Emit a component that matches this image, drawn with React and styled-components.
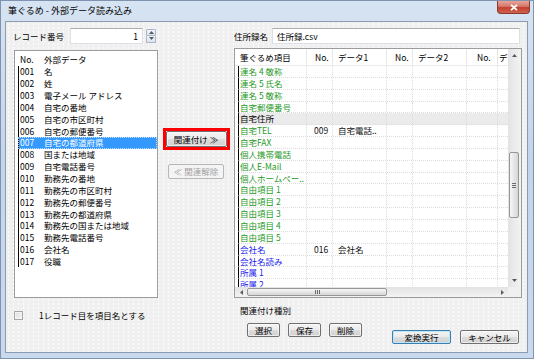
import React from "react";
import styled, { createGlobalStyle, css } from "styled-components";

const GlobalStyle = createGlobalStyle`
  html, body { margin: 0; padding: 0; background: #c6d7ec; }
  body {
    font-family: "Noto Sans CJK JP", "Liberation Sans", sans-serif;
    font-size: 8.5px;
    color: #000;
    overflow: hidden;
  }
  * { box-sizing: border-box; }
`;

const externalData = [
  ["001", "名"],
  ["002", "姓"],
  ["003", "電子メール アドレス"],
  ["004", "自宅の番地"],
  ["005", "自宅の市区町村"],
  ["006", "自宅の郵便番号"],
  ["007", "自宅の都道府県"],
  ["008", "国または地域"],
  ["009", "自宅電話番号"],
  ["010", "勤務先の番地"],
  ["011", "勤務先の市区町村"],
  ["012", "勤務先の郵便番号"],
  ["013", "勤務先の都道府県"],
  ["014", "勤務先の国または地域"],
  ["015", "勤務先電話番号"],
  ["016", "会社名"],
  ["017", "役職"],
];
const SELECTED = "007";

const fields = [
  { name: "連名 4 敬称", kind: "green" },
  { name: "連名 5 氏名", kind: "green" },
  { name: "連名 5 敬称", kind: "green" },
  { name: "自宅郵便番号", kind: "green" },
  { name: "自宅住所", kind: "section" },
  { name: "自宅TEL", kind: "green", no: "009", data: "自宅電話.." },
  { name: "自宅FAX", kind: "green" },
  { name: "個人携帯電話", kind: "green" },
  { name: "個人E-Mail", kind: "green" },
  { name: "個人ホームペー..", kind: "green" },
  { name: "自由項目 1", kind: "green" },
  { name: "自由項目 2", kind: "green" },
  { name: "自由項目 3", kind: "green" },
  { name: "自由項目 4", kind: "green" },
  { name: "自由項目 5", kind: "green" },
  { name: "会社名", kind: "blue", no: "016", data: "会社名" },
  { name: "会社名読み", kind: "blue" },
  { name: "所属 1", kind: "blue" },
  { name: "所属 2", kind: "blue" },
];

// header column widths and text indents
const columns = [
  { w: 72, pad: 5, label: "筆ぐるめ項目" },
  { w: 26, pad: 8, label: "No." },
  { w: 54, pad: 5, label: "データ1" },
  { w: 26, pad: 8, label: "No." },
  { w: 54, pad: 5, label: "データ2" },
  { w: 31, pad: 10, label: "No." },
  { w: 60, pad: 1, label: "データ3" },
];

const kindColor = { green: "#1f991f", blue: "#1c1ced", section: "#000" };

const Arrow = ({ dir }) => {
  const v = dir === "up" || dir === "down";
  const pts = {
    up: "0,3 2.5,0 5,3",
    down: "0,0 2.5,3 5,0",
    left: "3,0 0,2.5 3,5",
    right: "0,0 3,2.5 0,5",
  }[dir];
  return (
    <svg width={v ? 5 : 3} height={v ? 3 : 5} viewBox={v ? "0 0 5 3" : "0 0 3 5"}>
      <polygon points={pts} fill="#5a5a5a" />
    </svg>
  );
};

const App = () => (
  <>
    <GlobalStyle />
    <Window>
      <TitleBar>
        <Title>筆ぐるめ - 外部データ読み込み</Title>
        <CloseButton>
          <svg width="8" height="7" viewBox="0 0 8 7">
            <path d="M1 0.8 L7 6.2 M7 0.8 L1 6.2" stroke="#fff" strokeWidth="1.8" />
          </svg>
        </CloseButton>
      </TitleBar>

      <Client>
        <LeftCol>
          <FieldRow>
            <FieldLabel $w={57}>レコード番号</FieldLabel>
            <TextBox $w={73} $right>1</TextBox>
            <Spinner>
              <SpinHalf><Arrow dir="up" /></SpinHalf>
              <SpinHalf><Arrow dir="down" /></SpinHalf>
            </Spinner>
          </FieldRow>

          <ListBox>
            <ListHeader>
              <NoCell>No.</NoCell>
              <span>外部データ</span>
            </ListHeader>
            {externalData.map(([no, name]) => (
              <ListRow key={no} $selected={no === SELECTED}>
                <NoCell>{no}</NoCell>
                <span>{name}</span>
              </ListRow>
            ))}
          </ListBox>

          <CheckRow>
            <CheckBox />
            <span>1レコード目を項目名とする</span>
          </CheckRow>
        </LeftCol>

        <MidCol>
          <RedFrame>
            <Button $w={61} $h={16}>関連付け ≫</Button>
          </RedFrame>
          <Button $w={56} $h={15} $mt={14} disabled>
            ≪ 関連解除
          </Button>
        </MidCol>

        <RightCol>
          <FieldRow>
            <FieldLabel $w={38}>住所録名</FieldLabel>
            <TextBox $w={248}>住所録.csv</TextBox>
          </FieldRow>

          <Grid>
            <GridTop>
              <Viewport>
                <GridHeader>
                  {columns.map((c, i) => (
                    <HeadCell key={i} $w={c.w} $pad={c.pad}>
                      {c.label}
                    </HeadCell>
                  ))}
                </GridHeader>
                {fields.map((f) => (
                  <GridRow key={f.name} $kind={f.kind}>
                    {columns.map((c, i) => (
                      <Cell
                        key={i}
                        $w={i === 0 ? c.w - 4 : c.w}
                        $pad={i === 0 ? 1 : i % 2 ? 7 : 5}
                        $plain={i > 0}
                      >
                        {i === 0 ? f.name : i === 1 ? f.no : i === 2 ? f.data : ""}
                      </Cell>
                    ))}
                  </GridRow>
                ))}
              </Viewport>
              <VScroll>
                <ArrowBox $h={13}><Arrow dir="up" /></ArrowBox>
                <VTrack>
                  <VThumb>
                    <Grip $vertical={false} />
                  </VThumb>
                </VTrack>
                <ArrowBox $h={13}><Arrow dir="down" /></ArrowBox>
              </VScroll>
            </GridTop>
            <GridBottom>
              <HScroll>
                <ArrowBox $w={12}><Arrow dir="left" /></ArrowBox>
                <HThumb>
                  <Grip $vertical />
                </HThumb>
                <ArrowBox $w={12} $end><Arrow dir="right" /></ArrowBox>
              </HScroll>
              <Corner />
            </GridBottom>
          </Grid>

          <BottomBar>
            <KindGroup>
              <span>関連付け種別</span>
              <KindButtons>
                <Button $w={33} $h={14}>選択</Button>
                <Button $w={33} $h={14}>保存</Button>
                <Button $w={33} $h={14}>削除</Button>
              </KindButtons>
            </KindGroup>
            <DialogButtons>
              <Button $w={59} $h={14} $default>変換実行</Button>
              <Button $w={59} $h={14}>キャンセル</Button>
            </DialogButtons>
          </BottomBar>
        </RightCol>
      </Client>
    </Window>
  </>
);

export default App;

const Window = styled.div`
  width: 534px;
  height: 359px;
  display: flex;
  flex-direction: column;
  padding: 0 5px 5px 4px;
  border: 1px solid #7f93ae;
  background: linear-gradient(180deg, #d6e3f2 0%, #c3d5eb 45%, #c9daee 100%);
`;

const TitleBar = styled.div`
  height: 20px;
  margin: 0 -5px 0 -4px;
  padding: 0 3px 0 7px;
  display: flex;
  align-items: flex-start;
`;

const Title = styled.div`
  align-self: center;
  font-size: 9px;
  line-height: 12px;
  flex: 1;
`;

const CloseButton = styled.div`
  width: 33px;
  height: 13px;
  display: flex;
  align-items: center;
  justify-content: center;
  border: 1px solid #8a3a32;
  border-top: none;
  border-radius: 0 0 4px 4px;
  background: linear-gradient(180deg, #e7a59b 0%, #d6776a 45%, #c2402f 55%, #d0614d 100%);
`;

const Client = styled.div`
  flex: 1;
  display: flex;
  padding: 5px 5px 0 7px;
  border: 1px solid #8c9bb0;
  background-color: #f0f0f0;
  background-image: radial-gradient(circle, rgba(255, 255, 255, 0.8) 0.5px, transparent 0.8px);
  background-size: 5px 4px;
`;

const LeftCol = styled.div`
  width: 145px;
  display: flex;
  flex-direction: column;
`;

const MidCol = styled.div`
  width: 76px;
  display: flex;
  flex-direction: column;
  align-items: center;
  padding-top: 101px;
`;

const RightCol = styled.div`
  width: 288px;
  display: flex;
  flex-direction: column;
`;

const FieldRow = styled.div`
  height: 17px;
  display: flex;
  align-items: center;
`;

const FieldLabel = styled.span`
  width: ${(p) => p.$w}px;
  line-height: 12px;
`;

const TextBox = styled.div`
  width: ${(p) => p.$w}px;
  height: 16px;
  margin-top: 1px;
  padding: 0 4px;
  line-height: 14px;
  text-align: ${(p) => (p.$right ? "right" : "left")};
  background: #fff;
  border: 1px solid #dbe0e7;
  border-top-color: #abadb3;
`;

const Spinner = styled.div`
  width: 10px;
  height: 14px;
  margin-left: 3px;
  display: flex;
  flex-direction: column;
`;

const SpinHalf = styled.div`
  flex: 1;
  display: flex;
  align-items: center;
  justify-content: center;
  border: 1px solid #a9b6c8;
  border-radius: 1px;
  background: linear-gradient(180deg, #f4f7fb, #dbe4ef);

  & + & {
    border-top: none;
  }
`;

const ListBox = styled.div`
  margin: 6px 0 0 1px;
  width: 144px;
  height: 248px;
  background: #fff;
  border: 1px solid #9c9c9c;
  overflow: hidden;
`;

const ListHeader = styled.div`
  height: 15px;
  display: flex;
  align-items: center;
  padding-left: 4px;
  line-height: 12px;
`;

const NoCell = styled.span`
  width: 25px;
  padding-left: 1px;
`;

const ListRow = styled.div`
  height: 11.85px;
  margin-left: 3px;
  display: flex;
  align-items: center;
  line-height: 11px;
  border-left: 1px solid #000;
  white-space: nowrap;
  ${(p) =>
    p.$selected &&
    css`
      background: #3399ff;
      color: #fff;
      outline: 1px dotted rgba(255, 255, 255, 0.7);
      outline-offset: -1px;
    `}
`;

const CheckRow = styled.div`
  margin: 12px 0 0 1px;
  display: flex;
  align-items: center;
  gap: 16px;
  line-height: 10px;
`;

const CheckBox = styled.div`
  width: 9px;
  height: 9px;
  border: 1px solid #a6a6a6;
  background: linear-gradient(135deg, #dedede, #f7f7f7);
  box-shadow: inset 0 0 0 1px #f4f4f4;
`;

const RedFrame = styled.div`
  border: 3px solid #ff0000;
  display: flex;
`;

const Button = styled.button`
  width: ${(p) => p.$w}px;
  height: ${(p) => p.$h}px;
  margin: ${(p) => p.$mt || 0}px 0 0 0;
  padding: 0;
  font-family: inherit;
  font-size: 8.5px;
  line-height: ${(p) => p.$h - 2}px;
  color: #000;
  white-space: nowrap;
  border: 1px solid #707070;
  border-radius: 2px;
  background: linear-gradient(180deg, #f4f4f4 0%, #ebebeb 48%, #dddddd 52%, #d0d0d0 100%);
  box-shadow: inset 0 0 0 1px rgba(255, 255, 255, 0.6);

  ${(p) =>
    p.$default &&
    css`
      border-color: #3c7fb1;
      box-shadow: inset 0 0 0 1px #bfe6f8;
    `}

  &:disabled {
    color: #a3a3a3;
    border-color: #b5b8bb;
    background: #f4f4f4;
    box-shadow: none;
  }
`;

const Grid = styled.div`
  margin-top: 4px;
  height: 250px;
  border: 1px solid #9c9c9c;
  background: #fff;
  display: flex;
  flex-direction: column;
`;

const GridTop = styled.div`
  height: 238px;
  display: flex;
`;

const Viewport = styled.div`
  width: 273px;
  overflow: hidden;
  display: flex;
  flex-direction: column;
`;

const GridHeader = styled.div`
  height: 17px;
  flex-shrink: 0;
  display: flex;
  border-bottom: 1px solid #ececec;
`;

const HeadCell = styled.div`
  width: ${(p) => p.$w}px;
  flex-shrink: 0;
  padding-left: ${(p) => p.$pad}px;
  line-height: 16px;
  white-space: nowrap;
  border-right: 1px solid #e6e6e6;
`;

const GridRow = styled.div`
  height: 11.85px;
  flex-shrink: 0;
  margin-left: 3px;
  display: flex;
  border-left: 1px solid #000;
  border-bottom: 1px dotted #dddddd;
  color: ${(p) => kindColor[p.$kind]};
  background: ${(p) => (p.$kind === "section" ? "#ebebeb" : "transparent")};
`;

const Cell = styled.div`
  width: ${(p) => p.$w}px;
  flex-shrink: 0;
  padding-left: ${(p) => p.$pad}px;
  line-height: 11px;
  white-space: nowrap;
  overflow: hidden;
  border-right: 1px dotted #dcdcdc;
  ${(p) => p.$plain && "color: #111;"}
`;

const VScroll = styled.div`
  width: 13px;
  display: flex;
  flex-direction: column;
  background: linear-gradient(90deg, #e3e3e3, #f3f3f3);
`;

const ArrowBox = styled.div`
  ${(p) => (p.$h ? `height: ${p.$h}px;` : "")}
  ${(p) => (p.$w ? `width: ${p.$w}px;` : "")}
  ${(p) => (p.$end ? "margin-left: auto;" : "")}
  flex-shrink: 0;
  display: flex;
  align-items: center;
  justify-content: center;
`;

const VTrack = styled.div`
  flex: 1;
  padding-top: 90px;
`;

const VThumb = styled.div`
  width: 10px;
  height: 66px;
  margin-left: 1px;
  display: flex;
  align-items: center;
  justify-content: center;
  border: 1px solid #979797;
  border-radius: 2px;
  background: linear-gradient(90deg, #f6f6f6, #e6e6e6 50%, #d6d6d6);
`;

const Grip = styled.div`
  ${(p) =>
    p.$vertical
      ? css`
          width: 5px;
          height: 4px;
          background: repeating-linear-gradient(90deg, #6a6a6a 0 1px, transparent 1px 2px);
        `
      : css`
          width: 4px;
          height: 5px;
          background: repeating-linear-gradient(180deg, #6a6a6a 0 1px, transparent 1px 2px);
        `}
`;

const GridBottom = styled.div`
  height: 10px;
  display: flex;
`;

const HScroll = styled.div`
  width: 273px;
  display: flex;
  align-items: center;
  background: linear-gradient(180deg, #e3e3e3, #f3f3f3);
`;

const HThumb = styled.div`
  width: 140px;
  height: 8px;
  display: flex;
  align-items: center;
  justify-content: center;
  border: 1px solid #979797;
  border-radius: 2px;
  background: linear-gradient(180deg, #f6f6f6, #e6e6e6 50%, #d6d6d6);
`;

const Corner = styled.div`
  flex: 1;
  background: #f0f0f0;
`;

const BottomBar = styled.div`
  flex: 1;
  display: flex;
  align-items: flex-end;
  padding: 0 3px 8px 6px;
`;

const KindGroup = styled.div`
  align-self: flex-start;
  margin-top: 6px;
  display: flex;
  flex-direction: column;
  line-height: 12px;
`;

const KindButtons = styled.div`
  display: flex;
  gap: 8px;
  margin: 7px 0 0 7px;
`;

const DialogButtons = styled.div`
  margin-left: auto;
  display: flex;
  gap: 9px;
`;
